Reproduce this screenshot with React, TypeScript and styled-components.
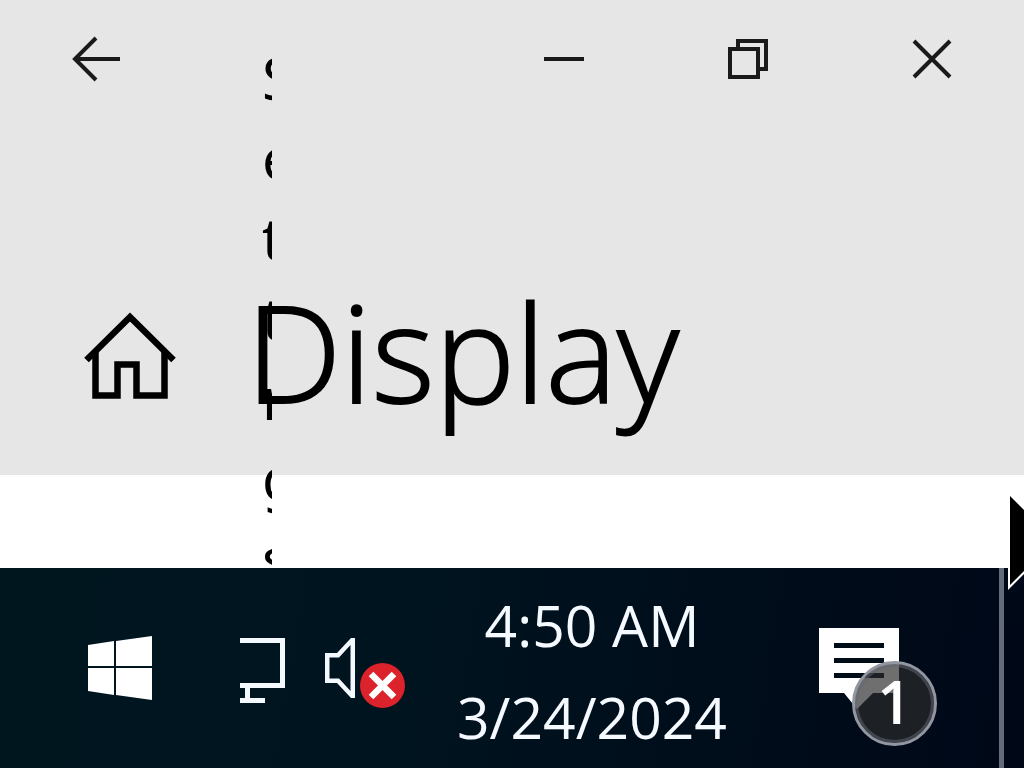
import React from "react";
import styled, { createGlobalStyle } from "styled-components";

const Global = createGlobalStyle`
  *, *::before, *::after { box-sizing: border-box; }
  body {
    margin: 0;
    background: #ffffff;
    color: #000000;
    font-family: "Open Sans", "Noto Sans", sans-serif;
  }
`;

const Screen = styled.div`
  position: relative;
  display: flex;
  flex-direction: column;
  min-height: 100vh;
  overflow: hidden;
`;

const SettingsWindow = styled.section`
  position: relative;
  flex: 1;
  overflow: hidden;
  background: #ffffff;
`;

const WindowHead = styled.header`
  height: 475px;
  background: #e6e6e6;
`;

const TitleBar = styled.div`
  display: flex;
  justify-content: space-between;
`;

const Caption = styled.div`
  display: flex;
`;

const IconButton = styled.button<{ $width: number; $height: number }>`
  display: flex;
  align-items: center;
  justify-content: center;
  width: ${(p) => p.$width}px;
  height: ${(p) => p.$height}px;
  padding: 0;
  border: 0;
  background: transparent;
  color: inherit;
`;

const VerticalName = styled.div`
  position: absolute;
  top: 38px;
  left: 262px;
  width: 10px;
  overflow: hidden;
  font-family: "Noto Sans", "Open Sans", sans-serif;
  font-size: 58px;
  line-height: 80px;
  white-space: nowrap;
`;

const Letter = styled.span`
  display: block;
`;

const PageRow = styled.div`
  display: flex;
  align-items: center;
  height: 240px;
  margin-top: 118px;
  padding-left: 84px;
  gap: 70px;
`;

const HomeLink = styled.a`
  display: flex;
  color: inherit;
`;

const PageTitle = styled.h1`
  margin: 0;
  font-size: 135px;
  font-weight: 300;
  line-height: 140px;
  padding-bottom: 10px;
  -webkit-text-stroke: 2px #000000;
`;

const Taskbar = styled.footer`
  display: grid;
  grid-template-columns: 240px 170px 1fr 225px 25px;
  height: 200px;
  background: linear-gradient(100deg, #00161f 0%, #00141f 40%, #000d1b 70%, #000818 100%);
  color: #f4faff;
`;

const Tray = styled.div`
  display: flex;
  align-items: center;
  gap: 38px;
`;

const Clock = styled.button`
  display: flex;
  flex-direction: column;
  align-items: center;
  padding: 11px 0 0;
  border: 0;
  background: transparent;
  color: inherit;
  font-family: inherit;
  font-size: 57px;
  line-height: 92px;
`;

const ActionCenter = styled.button`
  display: flex;
  align-items: flex-start;
  padding: 60px 0 0 45px;
  border: 0;
  background: transparent;
  font-family: inherit;
`;

const NoteWrap = styled.span`
  position: relative;
  display: block;
`;

const Badge = styled.span`
  position: absolute;
  top: 33px;
  left: 33px;
  width: 85px;
  height: 85px;
  border: 3px solid #9296a0;
  border-radius: 50%;
  background: rgba(43, 43, 43, 0.68);
  box-shadow: inset 0 0 0 3px rgba(100, 104, 116, 0.5);
  color: #ffffff;
  font-size: 60px;
  font-weight: 600;
  line-height: 74px;
  text-align: center;
`;

const ShowDesktop = styled.button`
  padding: 0;
  border: 0;
  border-left: 5px solid #646c7c;
  background: transparent;
`;

const Pointer = styled.svg`
  position: absolute;
  top: 488px;
  right: 0;
`;

export default function App() {
  return (
    <>
      <Global />
      <Screen>
        <SettingsWindow>
          <WindowHead>
            <TitleBar>
              <IconButton $width={192} $height={118} aria-label="Back">
                <svg width="50" height="46" viewBox="0 0 50 46" fill="none" stroke="#1a1a1a" strokeWidth="4">
                  <path d="M49 23H5M25 2L4 23L25 44" />
                </svg>
              </IconButton>
              <Caption>
                <IconButton $width={184} $height={118} aria-label="Minimize">
                  <svg width="40" height="4" viewBox="0 0 40 4">
                    <rect width="40" height="4" fill="#1a1a1a" />
                  </svg>
                </IconButton>
                <IconButton $width={184} $height={118} aria-label="Restore">
                  <svg width="40" height="40" viewBox="0 0 40 40" fill="none" stroke="#1a1a1a" strokeWidth="4">
                    <path d="M2 10H30V38H2ZM10 10V2H38V30H30" />
                  </svg>
                </IconButton>
                <IconButton $width={184} $height={118} aria-label="Close">
                  <svg width="40" height="40" viewBox="0 0 40 40" fill="none" stroke="#1a1a1a" strokeWidth="4">
                    <path d="M2 2L38 38M38 2L2 38" />
                  </svg>
                </IconButton>
              </Caption>
            </TitleBar>
            <PageRow>
              <HomeLink href="#home" aria-label="Home">
                <svg width="92" height="88" viewBox="0 0 92 88" fill="none" stroke="#000000" strokeWidth="6.5">
                  <path d="M2.500 48L46 5L89.500 48" />
                  <path d="M11.500 38V83.500H33.500V52.500H52.500V83.500H80.500V38" />
                </svg>
              </HomeLink>
              <PageTitle>Display</PageTitle>
            </PageRow>
          </WindowHead>
          <VerticalName>
            {["S", "e", "t", "ti", "n", "g", "s"].map((part, i) => (
              <Letter key={i}>{part}</Letter>
            ))}
          </VerticalName>
        </SettingsWindow>
        <Taskbar>
          <IconButton $width={240} $height={200} aria-label="Start">
            <svg width="64" height="64" viewBox="0 0 64 64" fill="#ffffff">
              <path d="M0 9L26 5V30H0ZM28 5L64 0V30H28ZM0 32H26V59L0 55ZM28 32H64V64L28 59Z" />
            </svg>
          </IconButton>
          <Tray>
            <IconButton $width={46} $height={80} aria-label="Network">
              <svg width="46" height="80" viewBox="0 0 46 80" fill="none" stroke="#f4f8ff" strokeWidth="5">
                <path d="M0 12.500H42.500V57.500H0M7.500 57.500V72.500M0 72.500H25" />
              </svg>
            </IconButton>
            <IconButton $width={84} $height={80} aria-label="Volume">
              <svg width="84" height="80" viewBox="0 0 84 80" fill="none">
                <path
                  fillRule="evenodd"
                  d="M1 25H13L27 10H31V70H27L13 55H1ZM5.500 29.500V50.500H15L26.500 63V17L15 29.500Z"
                  fill="#f4f8ff"
                />
                <circle cx="58.500" cy="57.500" r="22.500" fill="#dc222b" />
                <path d="M47 46L70 69M70 46L47 69" stroke="#ffffff" strokeWidth="6.500" />
              </svg>
            </IconButton>
          </Tray>
          <Clock>
            <span>4:50 AM</span>
            <span>3/24/2024</span>
          </Clock>
          <ActionCenter aria-label="Notifications">
            <NoteWrap>
              <svg width="80" height="84" viewBox="0 0 80 84" display="block">
                <path d="M0 0H80V65H54L38 81L25 65H0Z" fill="#ffffff" />
                <path d="M15 17.500H65M15 32.500H65M15 47.500H65" stroke="#000c16" strokeWidth="5" />
              </svg>
              <Badge>1</Badge>
            </NoteWrap>
          </ActionCenter>
          <ShowDesktop aria-label="Show desktop" />
        </Taskbar>
        <Pointer width="16" height="108" viewBox="0 0 16 108" aria-hidden="true">
          <path d="M0 4L16 20V86L0 102Z" fill="#ffffff" />
          <path d="M2 8L16 22V83L2 97Z" fill="#000000" />
        </Pointer>
      </Screen>
    </>
  );
}
